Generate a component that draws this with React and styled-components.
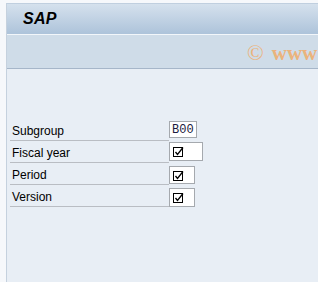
import React from "react";
import styled, { createGlobalStyle } from "styled-components";

const GlobalStyle = createGlobalStyle`
  html, body { margin: 0; padding: 0; background: #f6f8fb; }
  body { width: 318px; height: 282px; overflow: hidden; }
`;

const Window = styled.div`
  margin: 3px 0 0 6px;
  height: 279px;
  border-left: 1px solid #c5d1de;
  border-top: 1px solid #c0cfdf;
  background: #e8eef5;
  display: flex;
  flex-direction: column;
  font-family: "Liberation Sans", Arial, sans-serif;
`;

const TitleBar = styled.div`
  height: 30px;
  background: linear-gradient(#d5e1ed, #adc3da);
  display: flex;
  align-items: center;
  padding-left: 16px;
`;

const Title = styled.span`
  font-family: "Liberation Sans", Arial, sans-serif;
  font-weight: bold;
  font-style: italic;
  font-size: 16px;
  color: #000;
  letter-spacing: 0.3px;
`;

const Toolbar = styled.div`
  height: 33px;
  border-top: 1px solid #f2f6fa;
  border-bottom: 1px solid #a6b6c9;
  background: #cfdce8;
  display: flex;
  align-items: center;
  padding-left: 240px;
  overflow: hidden;
  white-space: nowrap;
`;

const Watermark = styled.span`
  font-family: "Liberation Serif", "Times New Roman", serif;
  font-weight: bold;
  font-size: 21px;
  color: #ebb37c;
  display: flex;
  align-items: center;
  gap: 8px;
  padding-top: 3px;
`;

const Copy = styled.span`
  font-weight: normal;
  font-size: 22px;
`;

const Body = styled.div`
  padding: 50px 0 0 3px;
  display: flex;
  flex-direction: column;
`;

const Row = styled.div`
  display: flex;
  height: 22px;
`;

const Label = styled.div`
  width: 159px;
  padding-left: 2px;
  border-bottom: 1px solid #b9bdc3;
  font-size: 12px;
  color: #000;
  display: flex;
  align-items: center;
  padding-top: 3px;
  box-sizing: border-box;
`;

const Field = styled.div`
  width: ${(p) => p.$w}px;
  height: ${(p) => p.$h}px;
  margin-top: ${(p) => p.$top}px;
  box-sizing: border-box;
  border: 1px solid #a5a9ae;
  background: #fff;
  display: flex;
  align-items: center;
  padding-left: ${(p) => (p.$text ? 2 : 3)}px;
  font-family: "Liberation Mono", "Courier New", monospace;
  font-size: 12px;
  color: #1a1a40;
`;

const Check = () => (
  <svg width="11" height="11" viewBox="0 0 11 11">
    <rect x="0.5" y="1.5" width="9" height="9" fill="none" stroke="#000" strokeWidth="1" />
    <path d="M2.5 6 L4.5 8.5 L10 1.5" fill="none" stroke="#000" strokeWidth="1.3" />
  </svg>
);

const rows = [
  { label: "Subgroup", w: 28, h: 17, top: 2, value: "B00" },
  { label: "Fiscal year", w: 34, h: 19, top: 1 },
  { label: "Period", w: 26, h: 18, top: 3 },
  { label: "Version", w: 26, h: 19, top: 3 },
];

export default function App() {
  return (
    <>
      <GlobalStyle />
      <Window>
        <TitleBar>
          <Title>SAP</Title>
        </TitleBar>
        <Toolbar>
          <Watermark>
            <Copy>©</Copy>
            <span>www</span>
          </Watermark>
        </Toolbar>
        <Body>
          {rows.map((r) => (
            <Row key={r.label}>
              <Label>{r.label}</Label>
              <Field $w={r.w} $h={r.h} $top={r.top} $text={!!r.value}>
                {r.value ? r.value : <Check />}
              </Field>
            </Row>
          ))}
        </Body>
      </Window>
    </>
  );
}
